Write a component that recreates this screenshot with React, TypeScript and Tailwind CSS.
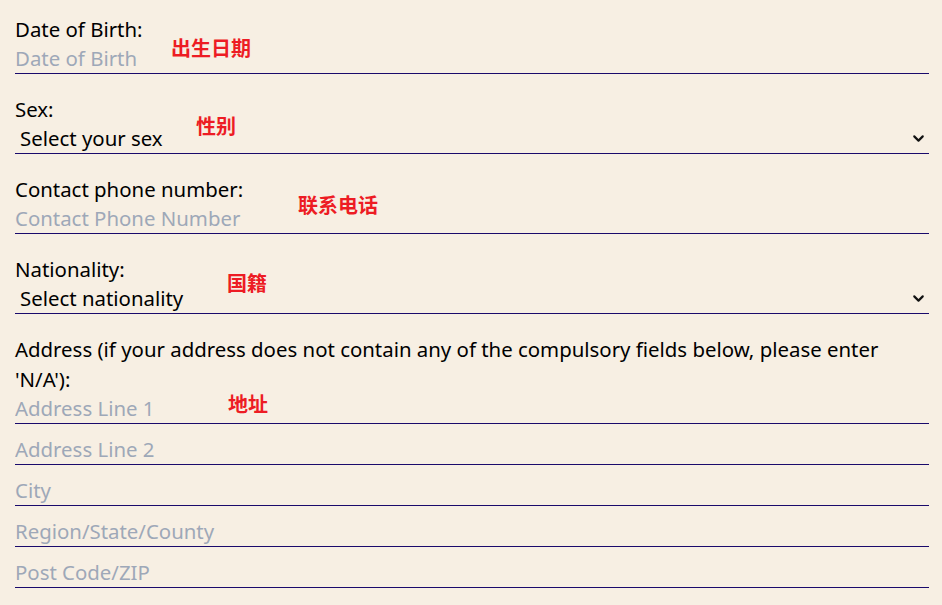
import { ChevronDown } from "lucide-react";

const font = { fontFamily: "'Noto Sans', 'Open Sans', sans-serif" };

type Note = { text: string; left: number; top: number };

// red annotations laid over the form
const notes: Note[] = [
  { text: "出生日期", left: 171, top: 39 },
  { text: "性别", left: 196, top: 117 },
  { text: "联系电话", left: 298, top: 196 },
  { text: "国籍", left: 227, top: 274 },
  { text: "地址", left: 228, top: 395 },
];

const TextField = ({ label, placeholder }: { label: string; placeholder: string }) => (
  <div className="flex flex-col mb-[20px]">
    <label className="h-[30px] leading-[30px] text-black">{label}</label>
    <input
      className="h-[30px] bg-transparent outline-none border-b border-[#1a0a6b] placeholder:text-[#9ea8b8] text-black"
      placeholder={placeholder}
    />
  </div>
);

const SelectField = ({ label, value }: { label: string; value: string }) => (
  <div className="flex flex-col mb-[20px]">
    <label className="h-[30px] leading-[30px] text-black">{label}</label>
    <div className="h-[30px] flex flex-row items-center justify-between border-b border-[#1a0a6b] pl-[5px] pr-[2px]">
      <span className="text-black">{value}</span>
      <ChevronDown size={17} strokeWidth={3} color="#111" />
    </div>
  </div>
);

const AddressInput = ({ placeholder, first }: { placeholder: string; first?: boolean }) => (
  <input
    className={
      first
        ? "h-[30px] bg-transparent outline-none border-b border-[#1a0a6b] placeholder:text-[#9ea8b8]"
        : "h-[30px] mt-[11px] bg-transparent outline-none border-b border-[#1a0a6b] placeholder:text-[#9ea8b8]"
    }
    placeholder={placeholder}
  />
);

export default function App() {
  return (
    <div
      className="relative w-[942px] h-[605px] overflow-hidden bg-[#f7efe3] text-[20.4px] pl-[15px] pr-[13px] pt-[14px]"
      style={font}
    >
      <TextField label="Date of Birth:" placeholder="Date of Birth" />
      <SelectField label="Sex:" value="Select your sex" />
      <TextField label="Contact phone number:" placeholder="Contact Phone Number" />
      <SelectField label="Nationality:" value="Select nationality" />
      <div className="flex flex-col">
        <label className="leading-[30px] text-black">
          Address (if your address does not contain any of the compulsory fields below, please enter 'N/A'):
        </label>
        <AddressInput placeholder="Address Line 1" first />
        <AddressInput placeholder="Address Line 2" />
        <AddressInput placeholder="City" />
        <AddressInput placeholder="Region/State/County" />
        <AddressInput placeholder="Post Code/ZIP" />
      </div>

      {notes.map((n) => (
        <span
          key={n.text}
          className="absolute text-[20px] leading-[18px] font-bold text-[#ed1c24]"
          style={{ left: n.left, top: n.top, fontFamily: "'Noto Sans CJK SC', sans-serif" }}
        >
          {n.text}
        </span>
      ))}
    </div>
  );
}
